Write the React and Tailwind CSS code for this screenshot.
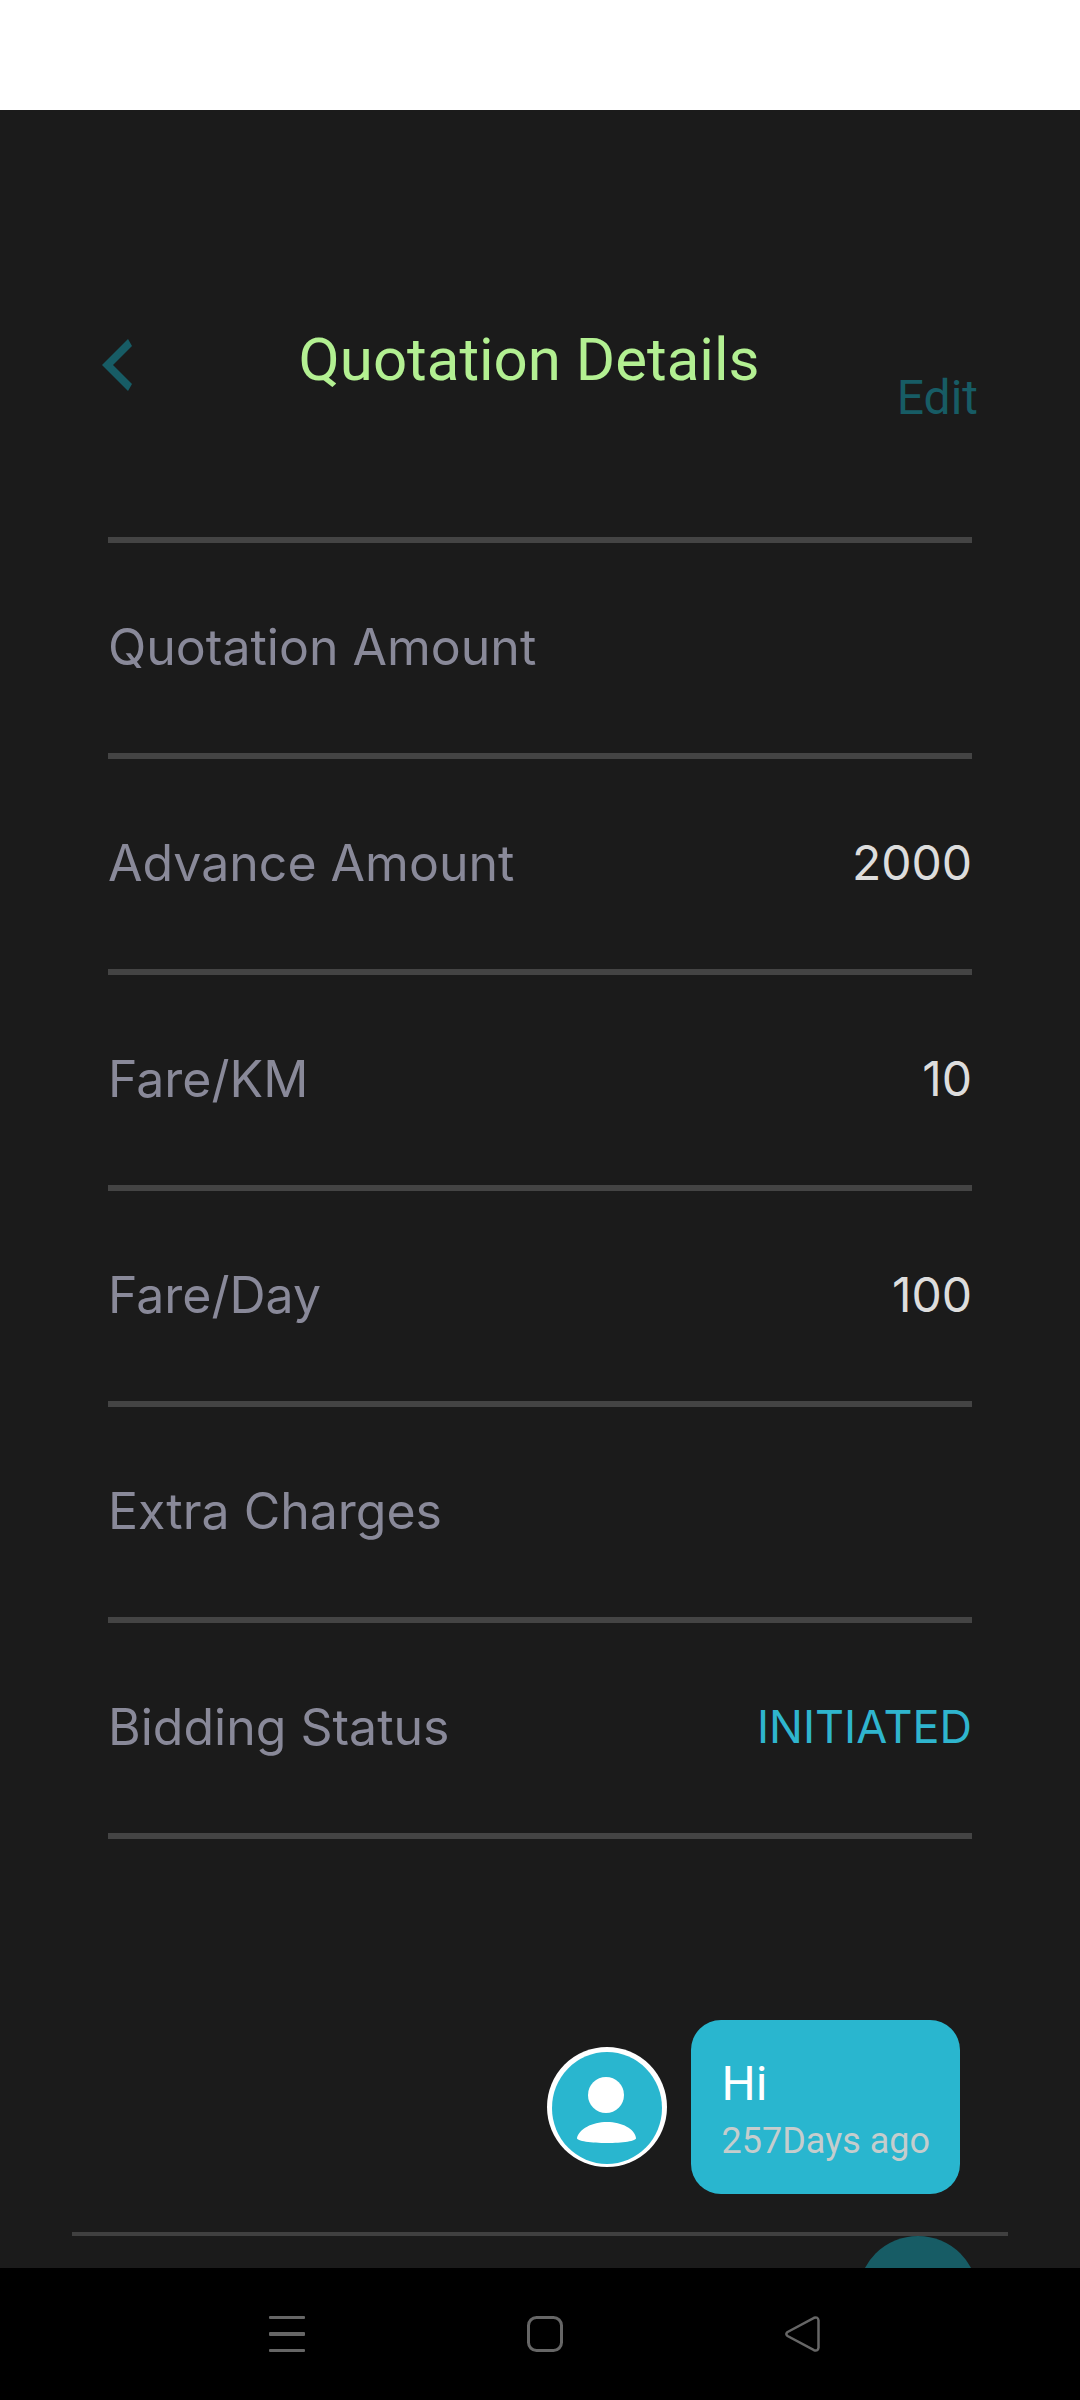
import { useState } from "react";

const quotation = [
  { label: "Quotation Amount", value: "" },
  { label: "Advance Amount", value: "2000" },
  { label: "Fare/KM", value: "10" },
  { label: "Fare/Day", value: "100" },
  { label: "Extra Charges", value: "" },
  { label: "Bidding Status", value: "INITIATED", status: true },
];

export default function App() {
  const [messages] = useState([{ id: 1, text: "Hi", time: "257Days ago" }]);

  return (
    <div className="flex h-screen flex-col bg-[#1b1b1b] font-['Roboto',sans-serif]">
      <div className="h-[110px] shrink-0 bg-white" />

      <main className="min-h-0 flex-1 overflow-hidden">
        <Header />

        <dl className="mx-[10%] border-t-6 border-[#444444]">
          {quotation.map((item) => (
            <DetailRow key={item.label} {...item} />
          ))}
        </dl>

        <section className="mx-[72px] mt-[181px] border-b-4 border-[#404040] pr-12 pb-[38px]">
          {messages.map((m) => (
            <Message key={m.id} {...m} />
          ))}
        </section>

        <div className="flex justify-end pr-[102px]">
          <button
            type="button"
            aria-label="Send message"
            className="size-[120px] rounded-full bg-[#175c65]"
          />
        </div>
      </main>

      <NavBar />
    </div>
  );
}

function Header() {
  return (
    <header className="grid grid-cols-[1fr_auto_1fr] items-start pt-[215px] pr-[102px] pb-[111px] pl-20">
      <button type="button" aria-label="Back" className="justify-self-start pt-3 pl-5">
        <svg width="34" height="56" viewBox="0 0 34 56" fill="#175c65">
          <path d="M2 28 28 2l4 7-19 19 19 19-4 7z" />
        </svg>
      </button>
      <h1 className="text-[60px] leading-[70px] text-[#b3f092]">Quotation Details</h1>
      <button
        type="button"
        className="mt-[45px] justify-self-end text-5xl leading-[56px] text-[#175c65]"
      >
        Edit
      </button>
    </header>
  );
}

function DetailRow({ label, value, status = false }) {
  return (
    <div className="flex h-[216px] items-center justify-between border-b-6 border-[#444444] pb-0.5 font-['Inter',sans-serif] leading-[72px]">
      <dt className="text-[50px] text-[#898999]">{label}</dt>
      <dd className={status ? "text-[45px] text-[#2fb5ce]" : "text-[48px] text-[#dddddd]"}>
        {value}
      </dd>
    </div>
  );
}

function Message({ text, time }) {
  return (
    <div className="flex items-center justify-end gap-6">
      <Avatar />
      <div className="rounded-[30px] bg-[#29b6cf] px-[30px] pt-9 pb-[30px]">
        <p className="text-5xl leading-[56px] text-white">{text}</p>
        <p className="mt-1.5 text-4xl leading-[46px] text-[#c5cdcd]">{time}</p>
      </div>
    </div>
  );
}

function Avatar() {
  return (
    <svg width="120" height="120" viewBox="0 0 120 120">
      <circle cx="60" cy="60" r="60" fill="#fff" />
      <ellipse cx="60" cy="61" rx="55" ry="56" fill="#29b6cf" />
      <circle cx="59" cy="48" r="18" fill="#fff" />
      <path d="M30 91c2-9 15-16 30-16s28 7 29 16c1 3-14 5-29 5s-31-2-30-5z" fill="#fff" />
    </svg>
  );
}

function NavBar() {
  return (
    <nav className="flex h-[132px] shrink-0 items-center justify-center gap-[222px] bg-black pl-2.5">
      <button type="button" aria-label="Recent apps">
        <svg width="36" height="36" viewBox="0 0 36 36" fill="#666">
          <rect width="36" height="3" rx="1" />
          <rect y="16" width="36" height="4" rx="1" />
          <rect y="33" width="36" height="3" rx="1" />
        </svg>
      </button>
      <button type="button" aria-label="Home">
        <svg width="36" height="36" viewBox="0 0 36 36" fill="none" stroke="#666" strokeWidth="3">
          <rect x="1.5" y="1.5" width="33" height="33" rx="8" />
        </svg>
      </button>
      <button type="button" aria-label="Go back">
        <svg width="36" height="36" viewBox="0 0 36 36" fill="none" stroke="#666" strokeWidth="2.5">
          <path d="M2.6 16 29 1.8q4-1.400 4.500 2.600v27.200q-.5 4-4.500 2.600L2.600 20q-2.600-2 0-4z" />
        </svg>
      </button>
    </nav>
  );
}
